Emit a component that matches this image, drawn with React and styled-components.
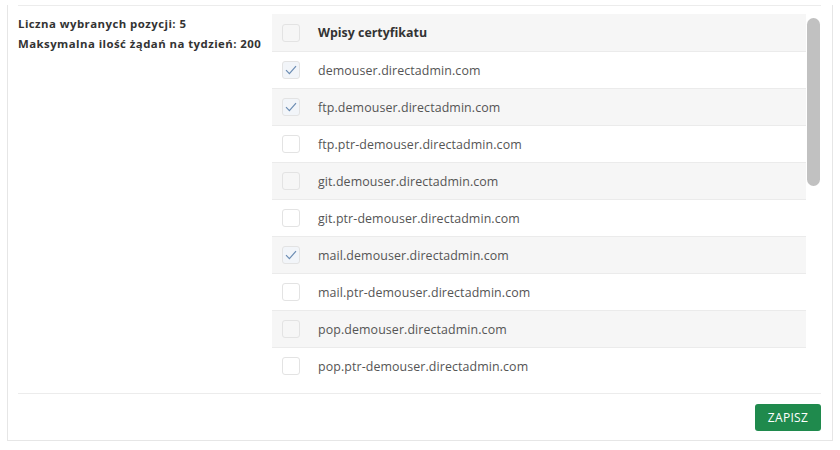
import React from "react";
import styled, { createGlobalStyle } from "styled-components";

const Global = createGlobalStyle`
  html, body { margin: 0; padding: 0; background: #fff; }
  body { font-family: "Open Sans", "Liberation Sans", sans-serif; }
`;

const Page = styled.div`
  padding: 0 7px 8px 7px;
`;

const Card = styled.div`
  border: 1px solid #e6e6e6;
  border-top: none;
  padding: 0 11px 9px 10px;
`;

const Divider = styled.div`
  height: 1px;
  background: #ececec;
  margin-top: ${(p) => p.top || 0}px;
`;

const Body = styled.div`
  display: flex;
  padding-top: 8px;
`;

const Info = styled.div`
  width: 254px;
  flex-shrink: 0;
  font-size: 11.4px;
  font-weight: 700;
  color: #333;
  line-height: 20px;
  letter-spacing: 0.45px;
`;

const TableFrame = styled.div`
  flex: 1;
  display: flex;
  height: 370px;
`;

const Rows = styled.div`
  flex: 1;
  overflow: hidden;
`;

const Track = styled.div`
  width: 15px;
  flex-shrink: 0;
  background: #fff;
  padding: 4px 1px 0 1px;
  box-sizing: border-box;
`;

const Thumb = styled.div`
  height: 168px;
  border-radius: 7px;
  background: #c1c1c1;
`;

const Row = styled.div`
  display: flex;
  align-items: center;
  height: ${(p) => (p.head ? 38 : 37)}px;
  box-sizing: border-box;
  padding-left: 10px;
  background: ${(p) => (p.shaded ? "#f6f6f6" : "#fff")};
  border-bottom: 1px solid #ebebeb;
`;

const Box = styled.span`
  width: 18px;
  height: 18px;
  box-sizing: border-box;
  border: 1px solid #e3e3e3;
  border-radius: 3px;
  background: ${(p) => (p.checked ? "#f2f5f9" : "transparent")};
  display: flex;
  align-items: center;
  justify-content: center;
  flex-shrink: 0;
`;

const Label = styled.span`
  margin-left: 18px;
  font-size: 12.4px;
  color: ${(p) => (p.head ? "#333" : "#555")};
  font-weight: ${(p) => (p.head ? 700 : 400)};
  letter-spacing: ${(p) => (p.head ? "0px" : "0.1px")};
`;

const Footer = styled.div`
  display: flex;
  justify-content: flex-end;
  padding-top: 10px;
`;

const SaveButton = styled.button`
  background: #1f8a4d;
  color: #fff;
  border: none;
  border-radius: 3px;
  height: 27px;
  width: 66px;
  font-family: "Open Sans", "Liberation Sans", sans-serif;
  font-size: 12px;
  letter-spacing: 0.3px;
  cursor: pointer;
`;

const Check = () => (
  <svg width="12" height="10" viewBox="0 0 12 10">
    <path d="M1 5.2 L4.4 8.6 L11 1.2" fill="none" stroke="#6b8cb3" strokeWidth="1.2" />
  </svg>
);

const entries = [
  ["demouser.directadmin.com", true],
  ["ftp.demouser.directadmin.com", true],
  ["ftp.ptr-demouser.directadmin.com", false],
  ["git.demouser.directadmin.com", false],
  ["git.ptr-demouser.directadmin.com", false],
  ["mail.demouser.directadmin.com", true],
  ["mail.ptr-demouser.directadmin.com", false],
  ["pop.demouser.directadmin.com", false],
  ["pop.ptr-demouser.directadmin.com", false],
  ["smtp.demouser.directadmin.com", true],
  ["smtp.ptr-demouser.directadmin.com", false],
];

export default function App() {
  return (
    <Page>
      <Global />
      <Card>
        <Divider top={5} />
        <Body>
          <Info>
            <div>Liczna wybranych pozycji: 5</div>
            <div>Maksymalna ilość żądań na tydzień: 200</div>
          </Info>
          <TableFrame>
            <Rows>
              <Row head shaded>
                <Box />
                <Label head>Wpisy certyfikatu</Label>
              </Row>
              {entries.map(([name, checked], i) => (
                <Row key={name} shaded={i % 2 === 1}>
                  <Box checked={checked}>{checked && <Check />}</Box>
                  <Label>{name}</Label>
                </Row>
              ))}
            </Rows>
            <Track>
              <Thumb />
            </Track>
          </TableFrame>
        </Body>
        <Divider top={9} />
        <Footer>
          <SaveButton>ZAPISZ</SaveButton>
        </Footer>
      </Card>
    </Page>
  );
}
